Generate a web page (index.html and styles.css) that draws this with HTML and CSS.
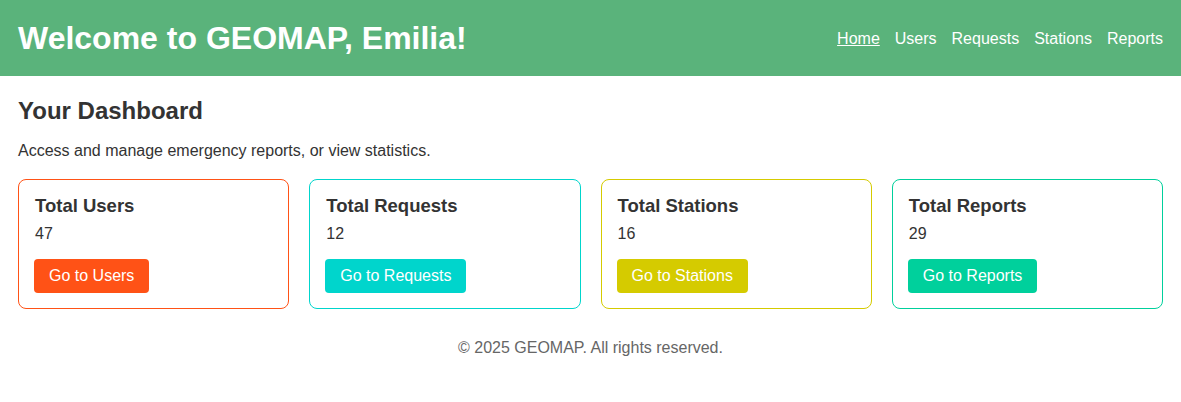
FILE: index.html
```html
<!DOCTYPE html>
<html lang="en">
<head>
<meta charset="utf-8">
<title>GEOMAP Dashboard</title>
<link rel="stylesheet" href="styles.css">
</head>
<body>
<header class="topbar">
  <h1 class="topbar-title">Welcome to GEOMAP, Emilia!</h1>
  <nav class="topbar-nav">
    <a href="#" class="nav-link nav-link-active">Home</a>
    <a href="#" class="nav-link">Users</a>
    <a href="#" class="nav-link">Requests</a>
    <a href="#" class="nav-link">Stations</a>
    <a href="#" class="nav-link">Reports</a>
  </nav>
</header>
<main class="content">
  <h2 class="page-title">Your Dashboard</h2>
  <p class="page-intro">Access and manage emergency reports, or view statistics.</p>
  <section class="cards">
    <div class="card card-users">
      <h3 class="card-title">Total Users</h3>
      <p class="card-count">47</p>
      <a href="#" class="card-btn">Go to Users</a>
    </div>
    <div class="card card-requests">
      <h3 class="card-title">Total Requests</h3>
      <p class="card-count">12</p>
      <a href="#" class="card-btn">Go to Requests</a>
    </div>
    <div class="card card-stations">
      <h3 class="card-title">Total Stations</h3>
      <p class="card-count">16</p>
      <a href="#" class="card-btn">Go to Stations</a>
    </div>
    <div class="card card-reports">
      <h3 class="card-title">Total Reports</h3>
      <p class="card-count">29</p>
      <a href="#" class="card-btn">Go to Reports</a>
    </div>
  </section>
</main>
<footer class="footer">© 2025 GEOMAP. All rights reserved.</footer>
</body>
</html>
```

FILE: styles.css
```css
* { box-sizing: border-box; }

body {
  margin: 0;
  font-family: "Liberation Sans", Arial, sans-serif;
  color: #333;
  background: #fff;
}

.topbar {
  height: 76px;
  padding: 0 18px;
  background: #5ab37b;
  display: flex;
  align-items: center;
  justify-content: space-between;
}

.topbar-title {
  margin: 0;
  font-size: 32px;
  font-weight: bold;
  color: #fff;
}

.topbar-nav {
  display: flex;
  gap: 15px;
  padding-top: 1px;
}

.nav-link {
  color: #fff;
  font-size: 16px;
  text-decoration: none;
}

.nav-link-active { text-decoration: underline; }

.content {
  padding: 21px 18px 0;
}

.page-title {
  margin: 0 0 17px;
  font-size: 24px;
  font-weight: bold;
}

.page-intro {
  margin: 0 0 19px;
  font-size: 16px;
}

.cards {
  display: grid;
  grid-template-columns: repeat(4, 1fr);
  gap: 20px;
}

.card {
  border: 1px solid;
  border-radius: 8px;
  padding: 15px 16px 15px;
  height: 130px;
}

.card-title {
  margin: 0 0 8px;
  font-size: 18.5px;
  font-weight: bold;
}

.card-count {
  margin: 0 0 16px;
  font-size: 16px;
}

.card-btn {
  display: inline-block;
  margin-left: -1px;
  padding: 8px 15px;
  border-radius: 4px;
  color: #fff;
  font-size: 16px;
  text-decoration: none;
}

.card-users { border-color: #ff5216; }
.card-users .card-btn { background: #ff5216; }
.card-requests { border-color: #00d5cc; }
.card-requests .card-btn { background: #00d5cc; }
.card-stations { border-color: #d5cb00; }
.card-stations .card-btn { background: #d5cb00; }
.card-reports { border-color: #00d09c; }
.card-reports .card-btn { background: #00d09c; }

.footer {
  margin-top: 30px;
  text-align: center;
  font-size: 16px;
  color: #666;
}
```
